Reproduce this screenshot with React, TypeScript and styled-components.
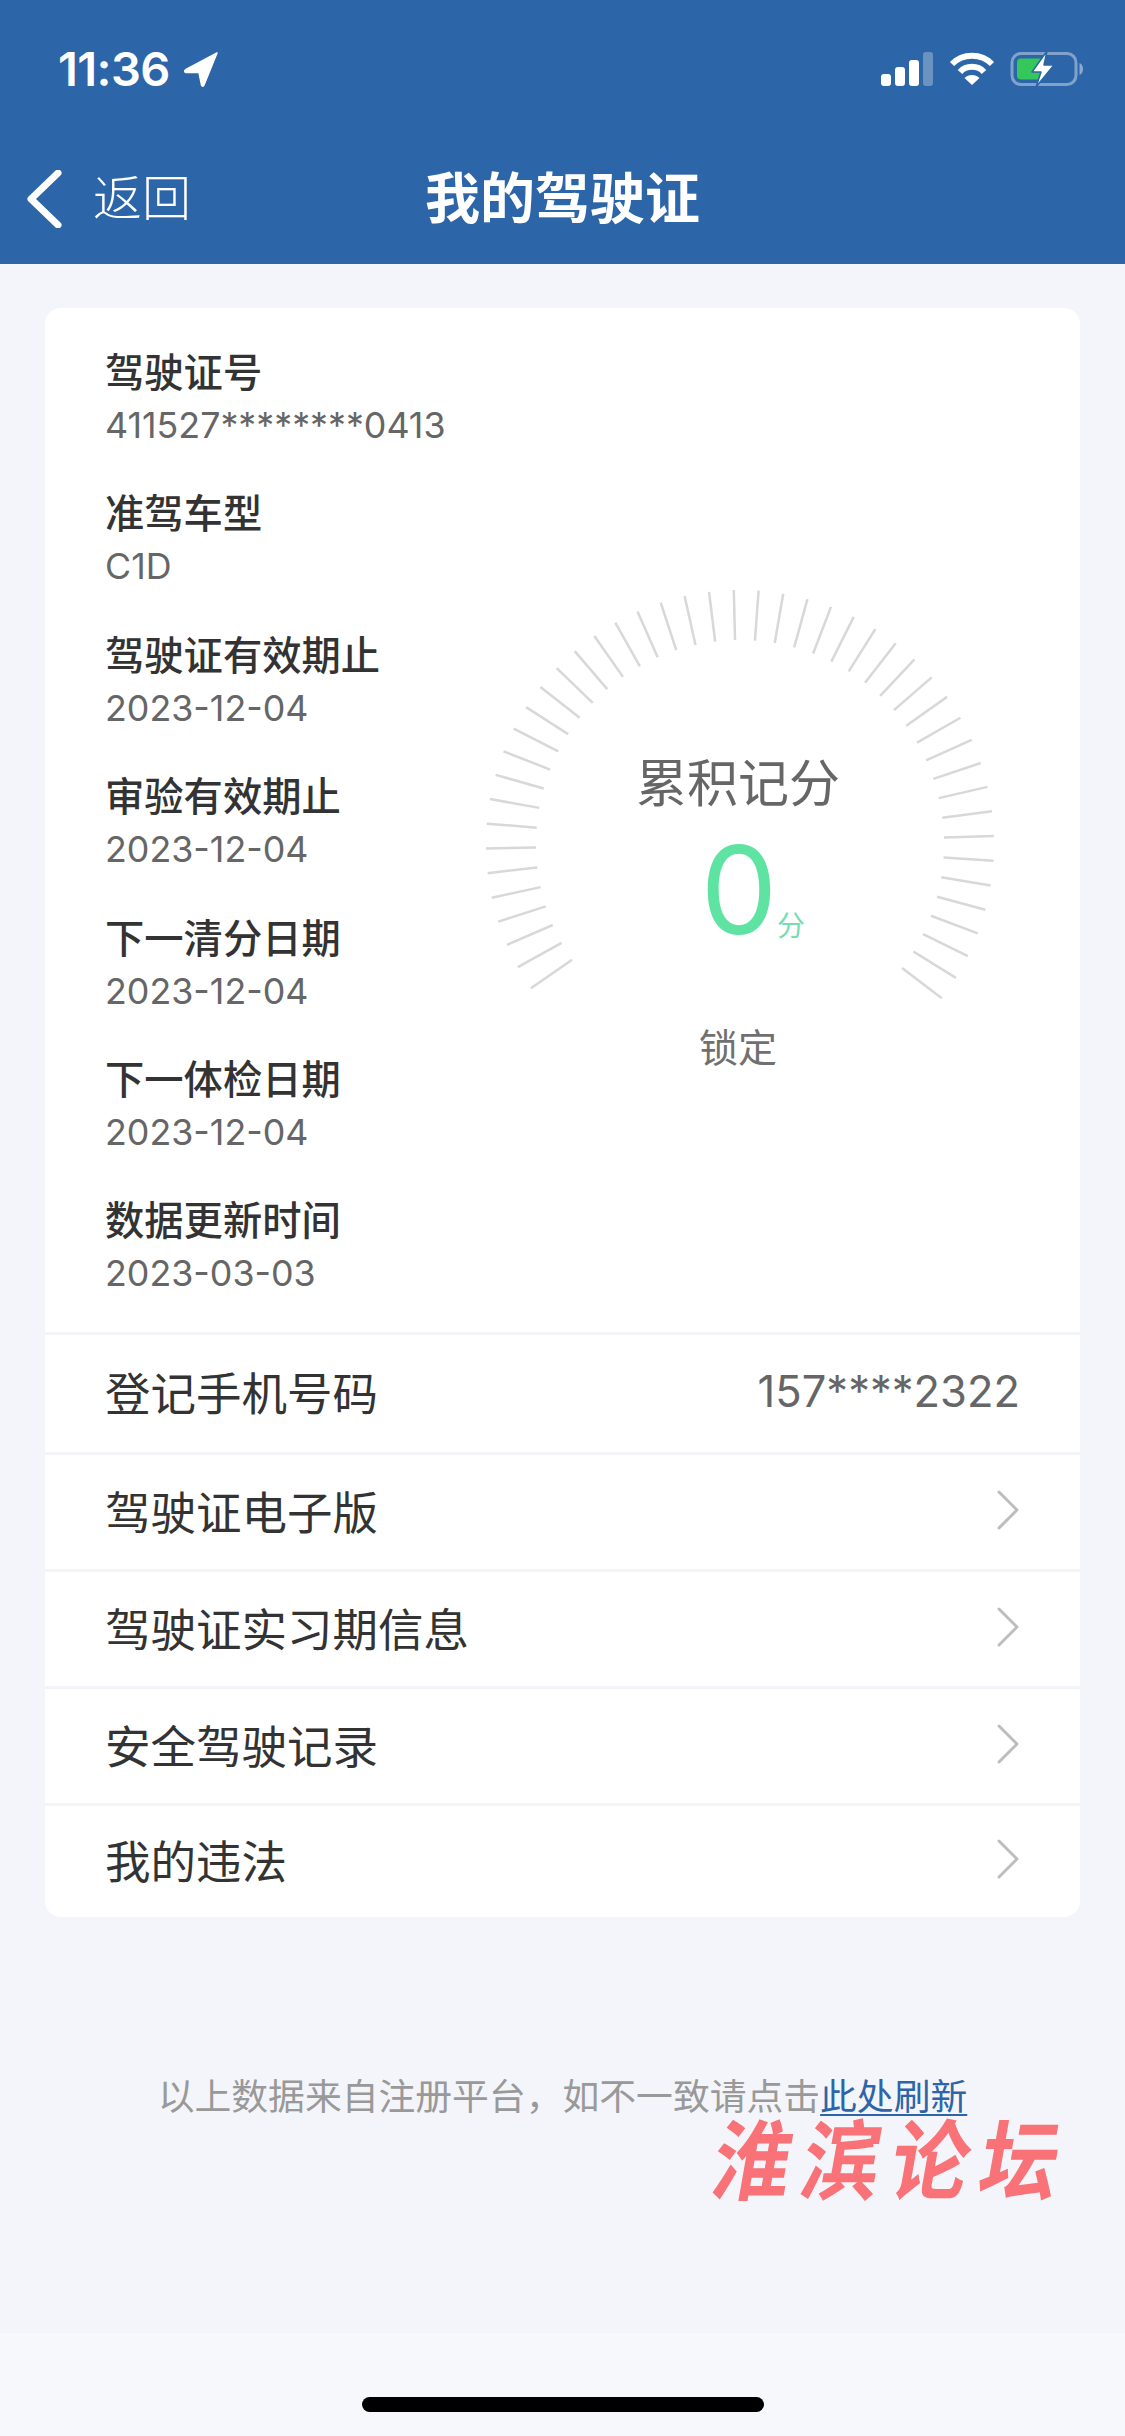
import React from 'react';
import styled, { createGlobalStyle } from 'styled-components';

const GlobalStyle = createGlobalStyle`
  html, body {
    margin: 0;
    padding: 0;
    background: #f6f6fb;
  }
  * {
    box-sizing: border-box;
  }
`;

const FONT = `Inter, "Noto Sans CJK SC", sans-serif`;

const Page = styled.div`
  position: relative;
  width: 1125px;
  height: 2436px;
  display: flex;
  flex-direction: column;
  overflow: hidden;
  background: #f4f5fa;
  font-family: ${FONT};
`;

const Header = styled.header`
  height: 264px;
  flex-shrink: 0;
  display: flex;
  flex-direction: column;
  background: #2c65a8;
  color: #fff;
`;

const StatusBar = styled.div`
  height: 140px;
  padding: 48px 41px 0 58px;
  display: flex;
  justify-content: space-between;
  align-items: flex-start;
`;

const Clock = styled.div`
  display: flex;
  align-items: center;
  gap: 14px;
  font-size: 47px;
  line-height: 42px;
  font-weight: 600;
  letter-spacing: -0.6px;
`;

const StatusIcons = styled.div`
  display: flex;
  align-items: center;
  gap: 15px;
  padding-top: 3px;
`;

const NavBar = styled.nav`
  height: 124px;
  display: grid;
  grid-template-columns: 1fr auto 1fr;
  align-items: flex-start;
  padding-top: 30px;
`;

const BackButton = styled.div`
  display: flex;
  align-items: center;
  gap: 31px;
  padding-left: 26px;
  font-size: 49px;
  line-height: 58px;
  font-weight: 300;
`;

const Title = styled.h1`
  margin: -1px 0 0;
  font-size: 55px;
  line-height: 58px;
  font-weight: 700;
`;

const Main = styled.main`
  flex: 1;
  padding: 44px 45px 0;
`;

const Card = styled.section`
  background: #fff;
  border-radius: 16px;
  overflow: hidden;
`;

const Summary = styled.div`
  height: 1024px;
  display: flex;
  padding: 40px 0 0 60px;
`;

const InfoList = styled.dl`
  width: 390px;
  margin: 0;
  display: flex;
  flex-direction: column;
  gap: 40.4px;
`;

const InfoItem = styled.div`
  display: flex;
  flex-direction: column;
`;

const InfoLabel = styled.dt`
  font-size: 39.3px;
  line-height: 50px;
  font-weight: 500;
  color: #333;
`;

const InfoValue = styled.dd`
  margin: 4px 0 0;
  font-size: 35.8px;
  line-height: 47px;
  color: #666;
`;

const Gauge = styled.div`
  position: relative;
  width: 540px;
  height: 620px;
  margin: 226px 0 0 -25px;
  display: flex;
  flex-direction: column;
  align-items: center;
  padding-top: 179.5px;
`;

const GaugeTicks = styled.svg`
  position: absolute;
  left: 0;
  top: 0;
`;

const GaugeTitle = styled.div`
  margin-right: 4px;
  font-size: 51px;
  line-height: 60px;
  color: #666;
`;

const ScoreRow = styled.div`
  display: flex;
  align-items: flex-end;
  height: 126px;
  margin: 13.5px 0 0 25.5px;
`;

const ScoreNumber = styled.span`
  font-size: 122px;
  line-height: 126px;
  font-weight: 400;
  color: #5ee3a2;
`;

const ScoreUnit = styled.span`
  margin: 0 0 10.5px -0.5px;
  font-size: 28px;
  line-height: 34px;
  color: #78dcb2;
`;

const GaugeStatus = styled.div`
  margin: 70px 4px 0 0;
  font-size: 39px;
  line-height: 50px;
  color: #707070;
`;

const Row = styled.div`
  height: 117px;
  padding: 0 60px 5px 60px;
  display: flex;
  align-items: center;
  justify-content: space-between;
  border-top: 3px solid #f3f4f8;
  font-size: 45.5px;
  color: #333;
  ${Summary} + & {
    height: 120px;
  }
  &:last-child {
    height: 114px;
  }
`;

const RowValue = styled.span`
  font-size: 43.5px;
  color: #666;
`;

const Footnote = styled.p`
  margin: 156px 0 0;
  text-align: center;
  font-size: 36.8px;
  line-height: 48px;
  color: #999;
`;

const RefreshLink = styled.a`
  color: #2d65a8;
  text-decoration: underline;
  text-underline-offset: 4px;
  text-decoration-thickness: 2px;
`;

const Watermark = styled.div`
  position: absolute;
  left: 714px;
  top: 2112px;
  font-size: 78px;
  line-height: 100px;
  font-weight: 700;
  letter-spacing: 11px;
  white-space: nowrap;
  color: #f87277;
  transform: skewX(-10deg) scaleY(1.12);
`;

const HomeArea = styled.div`
  height: 103px;
  flex-shrink: 0;
  display: flex;
  justify-content: center;
  padding-top: 64px;
  background: #f7f8fb;
`;

const HomeIndicator = styled.div`
  width: 402px;
  height: 15px;
  border-radius: 8px;
  background: #000;
`;

const LocationArrow = () => (
  <svg width="35" height="35" viewBox="0 0 35 35">
    <path d="M33 1 L2 17.5 Q-1 19.5 2 20.5 L15 20.5 L17.5 33 Q18.5 35.5 20 33 Z" fill="#fff" stroke="#fff" strokeWidth="1.5" strokeLinejoin="round" />
  </svg>
);

const SignalIcon = () => (
  <svg width="54" height="34" viewBox="0 0 54 34">
    <rect x="1" y="22" width="10" height="12" rx="3" fill="#fff" />
    <rect x="15" y="15" width="10" height="19" rx="3" fill="#fff" />
    <rect x="29" y="8" width="10" height="26" rx="3" fill="#fff" />
    <rect x="43" y="0" width="10" height="34" rx="3" fill="#fff" fillOpacity="0.3" />
  </svg>
);

const WifiIcon = () => (
  <svg width="46" height="34" viewBox="0 0 46 34" fill="none" stroke="#fff" strokeWidth="6">
    <path d="M3 12 C14 1 32 1 43 12" />
    <path d="M11 20 C17 13 29 13 35 20" />
    <path d="M23 33 L15.5 26 C19.5 22 26.5 22 30.5 26 Z" fill="#fff" stroke="none" />
  </svg>
);

const BatteryIcon = () => (
  <svg width="74" height="36" viewBox="0 0 74 36">
    <rect x="2" y="2.5" width="64" height="31" rx="9" fill="none" stroke="#fff" strokeOpacity="0.4" strokeWidth="3" />
    <path d="M69.5 12 C72 13 73 15.5 73 18 C73 20.5 72 23 69.5 24 Z" fill="#fff" fillOpacity="0.45" />
    <rect x="7" y="7.5" width="27" height="21" rx="4" fill="#34c759" />
    <path d="M37 0 L22 21 L31 21 L26 36 L44 14 L34 14 Z" fill="#fff" stroke="#2c65a8" strokeWidth="1.5" strokeLinejoin="round" />
  </svg>
);

const BackChevron = () => (
  <svg width="36" height="58" viewBox="0 0 36 58" fill="none" stroke="#fff" strokeWidth="7" strokeLinecap="round" strokeLinejoin="round">
    <path d="M32 3 L5 29 L32 55" />
  </svg>
);

const RowChevron = () => (
  <svg width="24" height="40" viewBox="0 0 24 40" fill="none" stroke="#bdbdbd" strokeWidth="3" strokeLinecap="round" strokeLinejoin="round">
    <path d="M3 2 L21 20 L3 38" />
  </svg>
);

const TICK_STEP = 5.6;
const TICK_COUNT = 46;
const TICK_START = -124.6;

const ticks = Array.from({ length: TICK_COUNT }, (_, i) => {
  const a = ((TICK_START + i * TICK_STEP) * Math.PI) / 180;
  const cx = 270;
  const cy = 270;
  return {
    x1: cx + 204 * Math.sin(a),
    y1: cy - 204 * Math.cos(a),
    x2: cx + 254 * Math.sin(a),
    y2: cy - 254 * Math.cos(a),
  };
});

const infoItems = [
  { label: '驾驶证号', value: '411527********0413' },
  { label: '准驾车型', value: 'C1D' },
  { label: '驾驶证有效期止', value: '2023-12-04' },
  { label: '审验有效期止', value: '2023-12-04' },
  { label: '下一清分日期', value: '2023-12-04' },
  { label: '下一体检日期', value: '2023-12-04' },
  { label: '数据更新时间', value: '2023-03-03' },
];

const linkRows = ['驾驶证电子版', '驾驶证实习期信息', '安全驾驶记录', '我的违法'];

export default function App() {
  return (
    <Page>
      <GlobalStyle />
      <Header>
        <StatusBar>
          <Clock>
            11:36
            <LocationArrow />
          </Clock>
          <StatusIcons>
            <SignalIcon />
            <WifiIcon />
            <BatteryIcon />
          </StatusIcons>
        </StatusBar>
        <NavBar>
          <BackButton>
            <BackChevron />
            返回
          </BackButton>
          <Title>我的驾驶证</Title>
        </NavBar>
      </Header>
      <Main>
        <Card>
          <Summary>
            <InfoList>
              {infoItems.map((item) => (
                <InfoItem key={item.label}>
                  <InfoLabel>{item.label}</InfoLabel>
                  <InfoValue>{item.value}</InfoValue>
                </InfoItem>
              ))}
            </InfoList>
            <Gauge>
              <GaugeTicks width="540" height="540" viewBox="0 0 540 540">
                {ticks.map((t, i) => (
                  <line key={i} x1={t.x1} y1={t.y1} x2={t.x2} y2={t.y2} stroke="#d8d8d8" strokeWidth="2.5" />
                ))}
              </GaugeTicks>
              <GaugeTitle>累积记分</GaugeTitle>
              <ScoreRow>
                <ScoreNumber>0</ScoreNumber>
                <ScoreUnit>分</ScoreUnit>
              </ScoreRow>
              <GaugeStatus>锁定</GaugeStatus>
            </Gauge>
          </Summary>
          <Row>
            登记手机号码
            <RowValue>157****2322</RowValue>
          </Row>
          {linkRows.map((label) => (
            <Row key={label}>
              {label}
              <RowChevron />
            </Row>
          ))}
        </Card>
        <Footnote>
          以上数据来自注册平台，如不一致请点击<RefreshLink>此处刷新</RefreshLink>
        </Footnote>
      </Main>
      <Watermark>淮滨论坛</Watermark>
      <HomeArea>
        <HomeIndicator />
      </HomeArea>
    </Page>
  );
}
